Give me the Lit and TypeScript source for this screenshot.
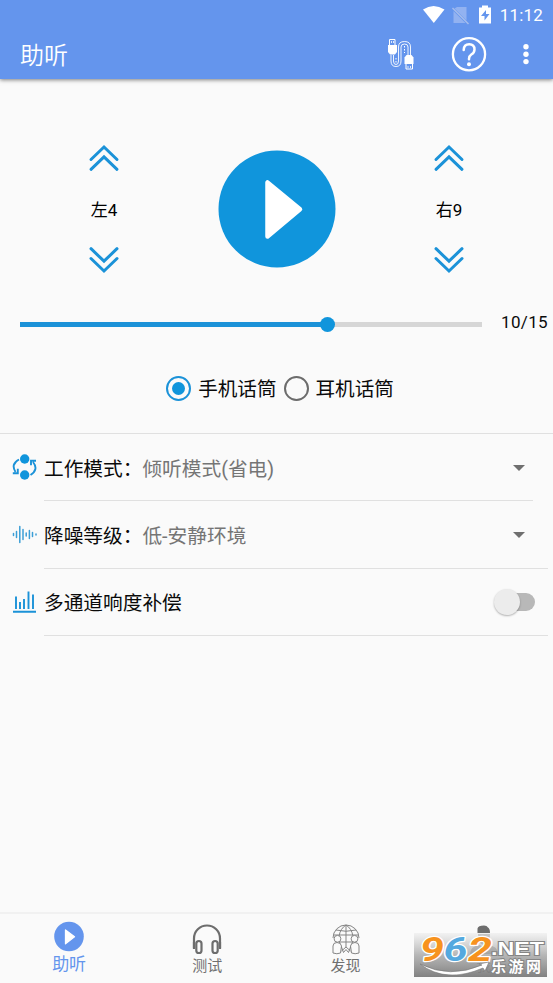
import { LitElement, html, css } from "lit";
import { customElement, property, state } from "lit/decorators.js";
import { classMap } from "lit/directives/class-map.js";

const chevrons = html`<svg viewBox="0 0 32 28" width="32" height="28" fill="none" stroke="#1b92d8" stroke-width="3" stroke-linecap="round"><path d="M3 15.5 16 3 29 15.5M3 25.3 16 12.8 29 25.3"/></svg>`;

@customElement("level-stepper")
class LevelStepper extends LitElement {
  @property() label = "";
  static styles = css`
    :host { display: flex; flex-direction: column; align-items: center; width: 60px; height: 130px; justify-content: space-between; }
    svg { display: block; }
    .down { transform: rotate(180deg); }
    .label { font-size: 17px; line-height: 24px; color: #000; white-space: nowrap; padding-top: 1px; }
  `;
  render() {
    return html`<div>${chevrons}</div><div class="label">${this.label}</div><div class="down">${chevrons}</div>`;
  }
}

@customElement("setting-row")
class SettingRow extends LitElement {
  @property() label = "";
  @property() value = "";
  static styles = css`
    :host { display: flex; height: 67.4px; padding-left: 12px; box-sizing: border-box; }
    .icon { width: 25px; display: flex; align-items: center; margin-right: 7px; padding-bottom: 1px; }
    .body { flex: 1; display: flex; align-items: center; border-bottom: 1px solid #e0e0e0; font-size: 19.7px; color: #0a0a0a; white-space: nowrap; }
    .value { color: #757575; flex: 1; }
  `;
  render() {
    return html`<div class="icon"><slot name="icon"></slot></div>
      <div class="body"><span class="label">${this.label}</span><span class="value">${this.value}</span><slot name="control"></slot></div>`;
  }
}

@customElement("app-root")
class AppRoot extends LitElement {
  @state() volume = 10;
  @state() mic = 0;
  @state() tab = 0;

  static styles = css`
    :host { display: flex; flex-direction: column; position: relative; width: 553px; height: 983px; background: #fafafa; overflow: hidden; font-family: Roboto, "Noto Sans CJK SC", sans-serif; }
    * { box-sizing: border-box; }
    svg { display: block; flex: none; }
    .top { height: 79px; flex: none; background: #6495ed; color: #fff; box-shadow: 0 1px 4px rgba(0,0,0,.5); }
    .status { height: 30px; display: flex; align-items: center; justify-content: flex-end; padding-right: 10px; }
    .time { font-size: 17px; font-weight: 450; line-height: 20px; margin-left: 6px; letter-spacing: .2px; }
    .bar { height: 49px; display: flex; align-items: center; padding: 0 18px 0 20px; }
    .bar svg { margin-top: -1px; }
    .title { font-size: 24px; line-height: 30px; font-weight: 350; flex: 1; padding-top: 2px; }
    .player { height: 166px; margin-top: 47px; flex: none; display: flex; justify-content: space-between; padding: 18px 74px 18px 74px; align-items: center; }
    .volume { height: 24px; margin-top: 20px; display: flex; align-items: center; padding: 0 5px 0 20px; flex: none; justify-content: space-between; }
    .track { width: 462px; height: 5px; background: #d6d6d6; display: flex; align-items: center; }
    .fill { height: 5px; background: #1b92d8; display: flex; align-items: center; justify-content: flex-end; }
    .thumb { width: 15px; height: 15px; border-radius: 50%; background: #1095dc; margin-right: -7.5px; flex: none; }
    .count { font-size: 17px; color: #0a0a0a; line-height: 20px; letter-spacing: .35px; margin-top: -5px; }
    .mics { margin-top: 39px; height: 58px; flex: none; display: flex; justify-content: center; align-items: flex-start; font-size: 19.6px; line-height: 26px; color: #0a0a0a; padding-left: 7px; }
    .mic { display: flex; align-items: center; }
    .mic span { padding-top: 2px; }
    .mic + .mic { margin-left: 7px; }
    .radio { width: 25px; height: 25px; border: 2.6px solid #6c6c6c; border-radius: 50%; margin: -1px 7px 0 0; display: flex; align-items: center; justify-content: center; }
    .radio.on { border-color: #1b92d8; }
    .radio.on::after { content: ""; width: 13px; height: 13px; border-radius: 50%; background: #1095dc; }
    .settings { border-top: 1px solid #e0e0e0; flex: 1; }
    .mode { margin-right: 20px; }
    .wide { margin-right: 5px; }
    .caret { border: 6.5px solid transparent; border-top-color: #6f6f6f; border-bottom: 0; margin-top: 1px; }
    .mode .caret { margin-right: 8px; }
    .wide .caret { margin-right: 23px; }
    .switch { width: 41px; height: 26px; margin-right: 13px; display: flex; align-items: center; }
    .groove { width: 32px; height: 18px; border-radius: 9px; background: #b8b8b8; margin-left: 9px; display: flex; align-items: center; }
    .knob { width: 26px; height: 26px; flex: none; border-radius: 50%; background: #ececec; box-shadow: 0 1px 2px rgba(0,0,0,.3); margin-left: -9px; }
    .tabs { height: 71px; border-top: 2px solid #f1f1f1; display: flex; flex: none; }
    .tab { flex: 1; display: flex; flex-direction: column; align-items: center; color: #707070; font-size: 15px; line-height: 20px; padding-top: 10px; }
    .tab svg { margin-bottom: 1px; }
    .tab.active { color: #6495ed; font-size: 17px; padding-top: 7px; }
    .brand { position: absolute; left: 414px; top: 927px; }
    .digits { font: italic 700 34px Roboto, "Liberation Sans", sans-serif; paint-order: stroke; stroke: #fff; stroke-width: 2.4px; stroke-linejoin: round; }
    .net { font: bold 18px "Liberation Sans", sans-serif; }
    .site { font: 700 15px/1 "Noto Sans CJK SC", sans-serif; }
    .outlined { fill: #fff; paint-order: stroke; stroke: #858585; stroke-width: 2px; }
  `;

  private topBar() {
    return html`<header class="top">
      <div class="status">
        <svg width="72" height="24" viewBox="422 3 72 24">
          <path fill="#fff" d="M423 9.500Q433.500 2.500 444.500 9.500L433.800 23Z"/>
          <path fill="#92b2f1" d="M457 7h9.500v13.500l-12-12ZM453.500 11V23h12Z"/><path d="m452.500 8 16 16" stroke="#a7bdec" stroke-width="1.500"/>
          <path fill="#fff" d="M479 7.500h3V5.500h6v2h3V23.500h-12Z"/><path fill="#6495ed" d="m486 10-5 6h3.500v4.500l5-6.500H486Z"/>
        </svg><span class="time">11:12</span>
      </div>
      <div class="bar"><span class="title">助听</span>
        <svg width="148" height="42" viewBox="387 33 148 42" fill="none" stroke="#fff">
          <path d="M389.500 39.500h5.500v6h-5.500Z" stroke-width="1"/><path d="M391.500 41v2M393.500 41v2" stroke-width=".8"/>
          <path fill="#fff" stroke="none" d="M388 45h9v7l-2 2.500h-5l-2-2.500Z"/>
          <path stroke-width=".9" d="M391 55v6q0 5.500 5 5.500t5-5.500V47q0-3 3.500-3t3.500 3v8M393.500 55v6q0 3.500 2.500 3.500t2.500-3.500V47q0-5.500 6-5.500t6 5.500v8"/>
          <path stroke-width="1" stroke-dasharray="1.500 1.500" d="M396 58v6M404.500 46v7"/>
          <path fill="#fff" stroke="none" d="M406.500 55h5l2 2.500v6.500h-9v-6.500Z"/><path d="M406 63.500h6.500v5.500H406Z"/><path d="M408 66v2M410.500 66v2" stroke-width=".8"/>
          <circle cx="469" cy="54.200" r="16.100" stroke-width="2.300"/>
          <path stroke-width="2.500" stroke-linecap="round" d="M463.700 50q.2-5.700 5.500-5.700 5.300.1 5.300 5.200 0 3.200-3.200 5-2.300 1.500-2.300 4.300v.5"/><circle cx="469" cy="64.300" r="2" fill="#fff" stroke="none"/>
          <g fill="#fff" stroke="none"><circle cx="526" cy="46.700" r="2.700"/><circle cx="526" cy="54.200" r="2.700"/><circle cx="526" cy="61.600" r="2.700"/></g>
        </svg>
      </div></header>`;
  }

  private tabIcon(i: number) {
    if (i === 0) return html`<svg width="30" height="32" viewBox="0 0 30 32"><circle cx="15" cy="15.500" r="14.800" fill="#6495ed"/><path d="m11.500 9 9 6.800-9 7Z" fill="#fff" stroke="#fff" stroke-width="1.300" stroke-linejoin="round"/></svg>`;
    if (i === 1) return html`<svg width="30" height="31" viewBox="0 0 30 31" fill="none" stroke="#6d6d6d" stroke-width="2.200"><path d="M2 24V14.500a13 13 0 0 1 26 0V24"/><rect x="4.300" y="17" width="5.200" height="12" rx="2.600"/><rect x="20.500" y="17" width="5.200" height="12" rx="2.600"/><path d="M2 18v7M28 18v7"/></svg>`;
    if (i === 2) return html`<svg width="30" height="31" viewBox="0 0 30 31" fill="none" stroke="#858585" stroke-width="1">
      <path d="M2 14a13 13 0 0 1 26 0M15 1v22M2.500 11h25M5 6q10 2.500 20 0M10.500 24C6.500 16 7 6 15 1c8 5 8.500 15 4.500 23M9 18h12"/>
      <circle cx="6.500" cy="14.800" r="3.400" fill="#fafafa"/><circle cx="23.500" cy="14.800" r="3.400" fill="#fafafa"/>
      <path fill="#fafafa" d="M2 29V22q0-3.500 4-3.500t4.500 3.500l-1 7q-3.500 1.500-7.500 0ZM20.500 29l-1-7q.5-3.500 4.500-3.500t4 3.500v7q-4 1.500-7.500 0Z"/>
      <path d="m10.500 23 2 5.500 2.500-3 2.500 3 2-5.500M10.500 27l4.500-4 4.500 4"/></svg>`;
    return html`<svg width="30" height="31" viewBox="0 0 30 31" fill="#6d6d6d"><path d="M8.500 9V4.500Q9 1.500 15 1.500q3 0 4 2 2 1 2 5.500ZM9 10h12q0 11-6 11T9 10ZM1 30q0-8 10-9l4 3 4-3q10 1 10 9Z"/></svg>`;
  }

  render() {
    return html`${this.topBar()}
      <section class="player">
        <level-stepper label="左4"></level-stepper>
        <svg width="118" height="118" viewBox="0 0 118 118"><circle cx="59" cy="59" r="58.500" fill="#1095dc"/><path d="M49.500 32.500v54L82 59.200Z" fill="#fff" stroke="#fff" stroke-width="4.500" stroke-linejoin="round"/></svg>
        <level-stepper label="右9"></level-stepper>
      </section>
      <div class="volume"><div class="track"><div class="fill" style="width:${(this.volume / 15) * 100}%"><i class="thumb"></i></div></div><span class="count">${this.volume}/15</span></div>
      <div class="mics">${["手机话筒", "耳机话筒"].map((t, i) => html`<div class="mic" @click=${() => (this.mic = i)}><i class=${classMap({ radio: true, on: this.mic === i })}></i><span>${t}</span></div>`)}</div>
      <main class="settings">
        <setting-row class="mode" label="工作模式：" value="倾听模式(省电)">
          <svg slot="icon" width="25" height="26" viewBox="0 0 25 26" fill="none" stroke="#1b92d8" stroke-width="1.900"><circle cx="12.700" cy="5" r="4.700" fill="#1095dc" stroke="none"/><circle cx="12.700" cy="21" r="4.700" fill="#1095dc" stroke="none"/><path d="M7 5.500Q-1.500 10 3.500 18M.8 19.300h5v-4.500M18.500 21q8.500-5.500 2.500-13M24 6.800h-5v4.500"/></svg>
          <i slot="control" class="caret"></i>
        </setting-row>
        <setting-row class="wide" label="降噪等级：" value="低-安静环境">
          <svg slot="icon" width="25" height="22" viewBox="0 0 25 22" stroke="#3b9ed6" stroke-width="1.500" stroke-linecap="round"><path d="M1.500 9.500v2M4.500 7.500v6M7.800 2.500v16M11 5.500v10M14.200 9v3M17.400 6.500v8M20.500 8.500v4M24 10v1"/></svg>
          <i slot="control" class="caret"></i>
        </setting-row>
        <setting-row class="wide" label="多通道响度补偿">
          <svg slot="icon" width="25" height="24" viewBox="0 0 25 24" stroke="#1b92d8" stroke-width="1.900"><path d="M4 6.500V19M8 12v7M12 9v10M16.500 1.500V19M21 4.500V19M1 21.800h23"/></svg>
          <div slot="control" class="switch"><div class="groove"><i class="knob"></i></div></div>
        </setting-row>
      </main>
      <nav class="tabs">${["助听", "测试", "发现", "我"].map((t, i) => html`<div class=${classMap({ tab: true, active: this.tab === i })} @click=${() => (this.tab = i)}>${this.tabIcon(i)}<span>${t}</span></div>`)}</nav>
      <svg class="brand" width="139" height="56" viewBox="0 -6 139 56">
        <defs><linearGradient id="shade" x2="0" y2="1"><stop stop-color="#eee" stop-opacity=".7"/><stop offset=".5" stop-color="#aaa" stop-opacity=".85"/><stop offset="1" stop-color="#777" stop-opacity=".92"/></linearGradient></defs>
        <rect width="133" height="44" fill="url(#shade)"/>
        <g class="digits"><text x="6" y="28" textLength="24" lengthAdjust="spacingAndGlyphs" fill="#f7931e">9</text><text x="29.500" y="28" textLength="24" lengthAdjust="spacingAndGlyphs" fill="#54a9df">6</text><text x="54" y="28" textLength="24" lengthAdjust="spacingAndGlyphs" fill="#f7931e">2</text></g>
        <path d="M6 31q30 15 62 1l-3-1 10-2-4 9-2-3Q32 51 6 31Z" fill="#fff" stroke="#777" stroke-width=".6"/>
        <text class="net outlined" x="77" y="22" textLength="53" lengthAdjust="spacingAndGlyphs">.NET</text>
        <text class="site outlined" x="77" y="39" textLength="50" lengthAdjust="spacing">乐游网</text>
      </svg>`;
  }
}
